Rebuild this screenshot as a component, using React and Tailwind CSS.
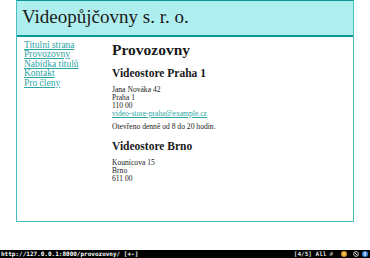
export default function App() {
  const links = ["Titulní strana", "Provozovny", "Nabídka titulů", "Kontakt", "Pro členy"];

  return (
    <div className="flex h-[258px] w-[370px] flex-col overflow-hidden bg-white text-[#1a1a1a] [font-family:'Liberation_Serif',serif]">
      <div className="ml-[16px] flex h-[222px] w-[338px] flex-col border border-[#4bbcbc] border-t-[#0a9999]">
        <header className="flex h-[36px] items-center border-b-2 border-[#0a9999] bg-[#afeeee] pb-[3px] pl-[5px]">
          <h1 className="text-[19px] leading-none">Videopůjčovny s. r. o.</h1>
        </header>

        <div className="flex pt-[4px]">
          <nav className="flex w-[95px] flex-col items-start pl-[7px] text-[9.5px] leading-[9.4px]">
            {links.map((l) => (
              <a key={l} href="#" className="text-[#2ba5a5] underline">
                {l}
              </a>
            ))}
          </nav>

          <main className="flex flex-col items-start">
            <h2 className="text-[15.5px] font-bold leading-[18px]">Provozovny</h2>

            <h3 className="mt-[7px] text-[11.5px] font-bold leading-[14px]">Videostore Praha 1</h3>
            <div className="mt-[6px] text-[7.6px] leading-[8px]">
              <div>Jana Nováka 42</div>
              <div>Praha 1</div>
              <div>110 00</div>
              <a href="#" className="text-[#2ba5a5] underline">video-store-praha@example.cz</a>
            </div>
            <p className="mt-[5px] text-[7.6px] leading-[8px]">Otevřeno denně od 8 do 20 hodin.</p>

            <h3 className="mt-[8px] text-[11.5px] font-bold leading-[14px]">Videostore Brno</h3>
            <div className="mt-[6px] text-[7.6px] leading-[8px]">
              <div>Kounicova 15</div>
              <div>Brno</div>
              <div>611 00</div>
            </div>
          </main>
        </div>
      </div>

      <div className="mt-auto flex h-[8px] items-center justify-between bg-black pl-[1px] pr-[2px] text-[6px] font-bold leading-none text-white [font-family:'DejaVu_Sans_Mono',monospace]">
        <span>http://127.0.0.1:8000/provozovny/ [+-]</span>
        <div className="flex items-center">
          <span className="text-[#e0e0e0]">[4/5] All</span>
          <span className="ml-[3px] text-[#9a9a9a]">#</span>
          <svg className="ml-[8px]" width="6" height="6" viewBox="0 0 6 6">
            <circle cx="3" cy="3" r="3" fill="#e39a22" />
            <circle cx="3" cy="3" r="1.3" fill="#f5d37a" />
          </svg>
          <svg className="ml-[6px]" width="6" height="6" viewBox="0 0 6 6">
            <circle cx="3" cy="3" r="2.4" fill="none" stroke="#c8c8c8" strokeWidth="1" />
            <line x1="1.3" y1="1.3" x2="4.7" y2="4.7" stroke="#c8c8c8" strokeWidth="1" />
          </svg>
          <svg className="ml-[3px]" width="6" height="6" viewBox="0 0 6 6">
            <circle cx="3" cy="3" r="3" fill="#3a86d8" />
            <path d="M4.2 2 Q3 1.2 2 2 Q2.2 3 3 3 Q4 3.2 3.8 4 Q3 4.8 1.8 4" fill="none" stroke="#fff" strokeWidth="0.8" />
          </svg>
        </div>
      </div>
    </div>
  );
}
